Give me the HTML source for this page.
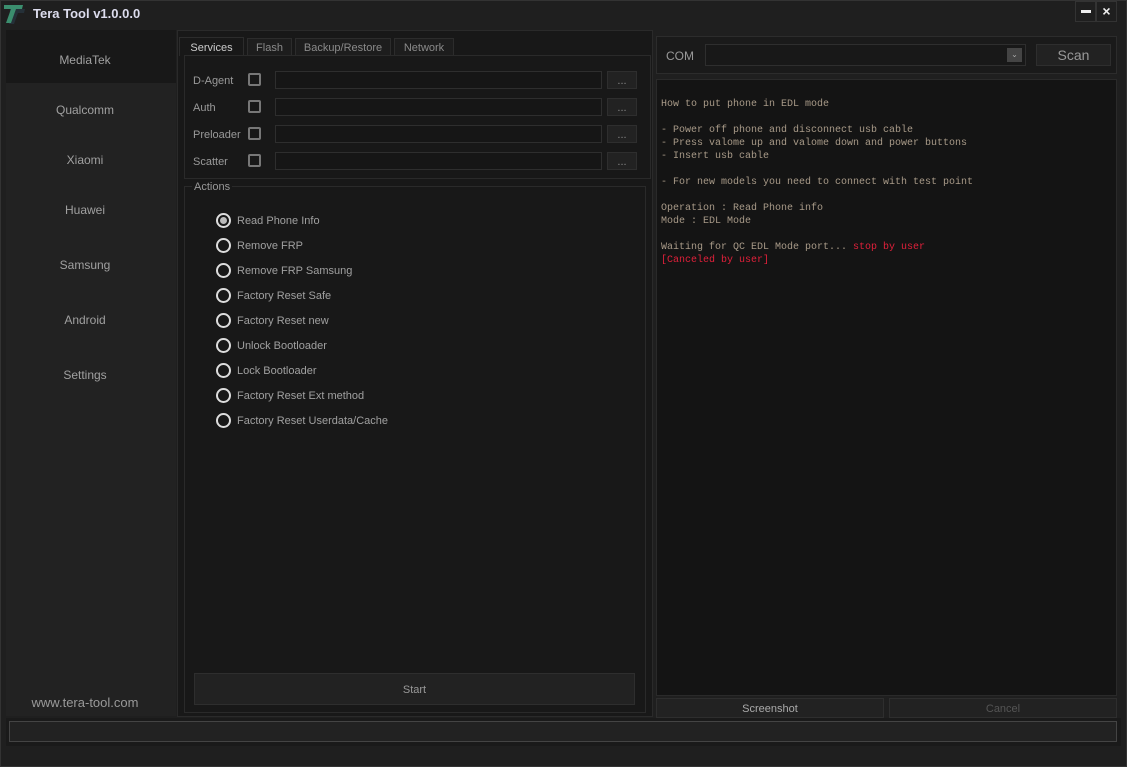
<!DOCTYPE html><html><head><meta charset="utf-8"><style>
*{box-sizing:border-box;margin:0;padding:0}
body{width:1127px;height:767px;background:#1f1f1f;font-family:"Liberation Sans",sans-serif;font-size:11px;color:#a8a8a8;position:relative;overflow:hidden}
.a{position:absolute}
.win{left:0;top:0;width:1127px;height:767px;border:1px solid #333}
.side{left:6px;top:30px;width:170px;height:686px;background:#222}
.si{position:absolute;left:0;width:170px;text-align:center;font-size:12px;color:#a0a0a0}
.mid{left:177px;top:30px;width:476px;height:687px;background:#181818;border:1px solid #2a2a2a}
.tab{top:38px;height:18px;background:#1d1d1d;border:1px solid #2c2c2c;border-bottom:none;text-align:center;line-height:18px;color:#8a8a8a;font-size:11px}
.box{border:1px solid #2e2e2e}
.lbl{font-size:11px;color:#9a9a9a}
.cb{width:13px;height:13px;border:2px solid #777;border-radius:2px}
.tb{height:18px;border:1px solid #2e2e2e;background:#161616}
.btn{background:#222;border:1px solid #2e2e2e;text-align:center;color:#888}
.rad{width:15px;height:15px;border:2px solid #ddd;border-radius:50%}
.rt{font-size:11px;color:#a0a0a0}
.log{font-family:"Liberation Mono",monospace;font-size:10px;line-height:13px;color:#a89a88;white-space:pre}
</style></head><body>
<div class="a win"></div>
<svg class="a" style="left:2px;top:4px" width="24" height="20"><polygon points="8,5 23,5 22,9 16,9 12,20 7,20" fill="#253038"/><polygon points="2,1 21,1 20,5 14,5 9,19 4,19 9,5 2,5" fill="#3b8e6e"/></svg>
<div class="a" style="left:33px;top:6px;font-size:13px;font-weight:bold;color:#dde">Tera Tool v1.0.0.0</div>
<div class="a" style="left:1075px;top:1px;width:21px;height:21px;border:1px solid #333"></div>
<div class="a" style="left:1081px;top:10px;width:10px;height:3px;background:#eee"></div>
<div class="a" style="left:1096px;top:1px;width:21px;height:21px;border:1px solid #333;color:#eee;text-align:center;font-size:14px;font-weight:bold;line-height:19px">×</div>

<div class="a side"></div>
<div class="a" style="left:6px;top:30px;width:170px;height:53px;background:#181818"></div>
<div class="si" style="top:53px">MediaTek</div>
<div class="si" style="top:103px">Qualcomm</div>
<div class="si" style="top:153px">Xiaomi</div>
<div class="si" style="top:203px">Huawei</div>
<div class="si" style="top:258px">Samsung</div>
<div class="si" style="top:313px">Android</div>
<div class="si" style="top:368px">Settings</div>
<div class="si" style="top:695px;font-size:13px;color:#999">www.tera-tool.com</div>

<div class="a mid"></div>
<div class="a tab" style="left:179px;top:37px;width:65px;height:19px;background:#181818;color:#ccc;line-height:20px">Services</div>
<div class="a tab" style="left:247px;width:45px">Flash</div>
<div class="a tab" style="left:295px;width:96px">Backup/Restore</div>
<div class="a tab" style="left:394px;width:60px">Network</div>
<div class="a box" style="left:184px;top:55px;width:467px;height:124px;border-color:#2a2a2a"></div>
<div class="a lbl" style="left:193px;top:75px">D-Agent</div>
<div class="a lbl" style="left:193px;top:102px">Auth</div>
<div class="a lbl" style="left:193px;top:129px">Preloader</div>
<div class="a lbl" style="left:193px;top:156px">Scatter</div>
<div class="a cb" style="left:248px;top:73px"></div><div class="a cb" style="left:248px;top:100px"></div><div class="a cb" style="left:248px;top:127px"></div><div class="a cb" style="left:248px;top:154px"></div>
<div class="a tb" style="left:275px;top:71px;width:327px"></div><div class="a tb" style="left:275px;top:98px;width:327px"></div><div class="a tb" style="left:275px;top:125px;width:327px"></div><div class="a tb" style="left:275px;top:152px;width:327px"></div>
<div class="a btn" style="left:607px;top:71px;width:30px;height:18px;line-height:18px">...</div>
<div class="a btn" style="left:607px;top:98px;width:30px;height:18px;line-height:18px">...</div>
<div class="a btn" style="left:607px;top:125px;width:30px;height:18px;line-height:18px">...</div>
<div class="a btn" style="left:607px;top:152px;width:30px;height:18px;line-height:18px">...</div>

<div class="a box" style="left:184px;top:186px;width:462px;height:527px;border-color:#2a2a2a"></div>
<div class="a" style="left:192px;top:181px;background:#181818;padding:0 2px;color:#999">Actions</div>
<div class="a rad" style="left:216px;top:213px"></div><div class="a" style="left:220px;top:217px;width:7px;height:7px;border-radius:50%;background:#bbb"></div>
<div class="a rad" style="left:216px;top:238px"></div><div class="a rad" style="left:216px;top:263px"></div><div class="a rad" style="left:216px;top:288px"></div><div class="a rad" style="left:216px;top:313px"></div><div class="a rad" style="left:216px;top:338px"></div><div class="a rad" style="left:216px;top:363px"></div><div class="a rad" style="left:216px;top:388px"></div><div class="a rad" style="left:216px;top:413px"></div>
<div class="a rt" style="left:237px;top:215px">Read Phone Info</div>
<div class="a rt" style="left:237px;top:240px">Remove FRP</div>
<div class="a rt" style="left:237px;top:265px">Remove FRP Samsung</div>
<div class="a rt" style="left:237px;top:290px">Factory Reset Safe</div>
<div class="a rt" style="left:237px;top:315px">Factory Reset new</div>
<div class="a rt" style="left:237px;top:340px">Unlock Bootloader</div>
<div class="a rt" style="left:237px;top:365px">Lock Bootloader</div>
<div class="a rt" style="left:237px;top:390px">Factory Reset Ext method</div>
<div class="a rt" style="left:237px;top:415px">Factory Reset Userdata/Cache</div>
<div class="a btn" style="left:194px;top:673px;width:441px;height:32px;line-height:33px;color:#999">Start</div>

<div class="a box" style="left:656px;top:36px;width:461px;height:38px;background:#1a1a1a;border-color:#2c2c2c"></div>
<div class="a" style="left:666px;top:49px;font-size:12px;color:#999">COM</div>
<div class="a tb" style="left:705px;top:44px;width:321px;height:22px;background:#181818"></div>
<div class="a" style="left:1007px;top:48px;width:15px;height:14px;background:#444;color:#aaa;font-size:8px;text-align:center;line-height:14px">⌄</div>
<div class="a btn" style="left:1036px;top:44px;width:75px;height:22px;line-height:21px;font-size:14px;color:#999">Scan</div>
<div class="a box" style="left:656px;top:79px;width:461px;height:617px;background:#141414;border-color:#2a2a2a"></div>
<div class="a log" style="left:661px;top:98px">How to put phone in EDL mode

- Power off phone and disconnect usb cable
- Press valome up and valome down and power buttons
- Insert usb cable

- For new models you need to connect with test point

Operation : Read Phone info
Mode : EDL Mode

Waiting for QC EDL Mode port... <span style="color:#e0203a">stop by user</span>
<span style="color:#e0203a">[Canceled by user]</span></div>
<div class="a btn" style="left:656px;top:698px;width:228px;height:20px;line-height:21px;color:#aaa">Screenshot</div>
<div class="a btn" style="left:889px;top:698px;width:228px;height:20px;line-height:21px;color:#555">Cancel</div>

<div class="a" style="left:6px;top:718px;width:1115px;height:28px;background:#1a1a1a"></div>
<div class="a" style="left:9px;top:721px;width:1108px;height:21px;background:#222;border:1px solid #444"></div>
</body></html>
